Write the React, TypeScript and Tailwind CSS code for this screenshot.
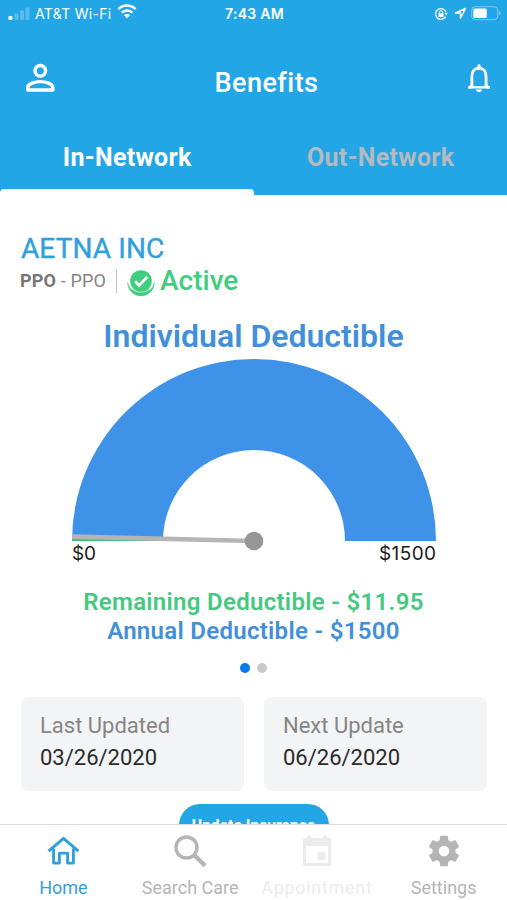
import { ReactNode } from 'react';

const R = 182;
const CX = 254;
const CY = 184;

function StatusBar() {
  return (
    <div className="h-7 grid grid-cols-[1fr_auto_1fr] items-center pb-px pl-2 pr-1.5 text-white font-['Inter',sans-serif]">
      <div className="flex items-center">
        <svg width="22" height="14" viewBox="0 0 22 14" fill="currentColor">
          <rect x="0.5" y="9" width="4" height="4" rx="1" />
          <rect x="6.5" y="6.5" width="4" height="6.5" rx="1" opacity="0.25" />
          <rect x="12" y="3.5" width="4" height="9.5" rx="1" opacity="0.25" />
          <rect x="17.5" y="0.5" width="4" height="12.5" rx="1" opacity="0.25" />
        </svg>
        <span className="ml-[5px] -mt-px text-[14px] tracking-[0.3px]">AT&amp;T Wi-Fi</span>
        <svg className="ml-[5px] -mt-1" width="20" height="15" viewBox="0 0 20 15" fill="none" stroke="currentColor" strokeWidth="2.6">
          <path d="M1.5 5.1a12 12 0 0 1 17 0" />
          <path d="M4.7 8.6a7.6 7.6 0 0 1 10.6 0" />
          <path d="M7 11.3a4.3 4.3 0 0 1 6 0L10 14.3Z" fill="currentColor" stroke="none" />
        </svg>
      </div>
      <span className="-mt-px text-[14px] font-semibold tracking-[0.3px]">7:43 AM</span>
      <div className="flex items-center justify-end">
        <svg width="14" height="14" viewBox="0 0 14 14" fill="none" stroke="currentColor" strokeWidth="1.3">
          <path d="M11.6 9.7a5.4 5.4 0 1 1 .3-4.9" />
          <path d="M10.5 5.8h3.3l-1.6 2.6Z" fill="currentColor" stroke="none" />
          <rect x="4.5" y="6.3" width="5" height="3.8" fill="currentColor" stroke="none" />
          <path d="M5.4 6.5V5.3a1.6 1.6 0 0 1 3.2 0v1.2" strokeWidth="1" />
        </svg>
        <svg className="ml-1.5" width="13" height="13" viewBox="0 0 13 13" fill="none" stroke="currentColor" strokeWidth="1.5" strokeLinejoin="round">
          <path d="M11.5 1.5 1.5 6h5v5Z" />
        </svg>
        <svg className="ml-1" width="30" height="15" viewBox="0 0 30 15" fill="none">
          <rect x="0.7" y="0.7" width="26" height="13" rx="3.5" stroke="currentColor" strokeOpacity="0.4" />
          <rect x="2.3" y="2.5" width="13.5" height="9.5" rx="1.5" fill="currentColor" />
          <path d="M28 5v4.5q1.5-.6 1.5-2.2T28 5Z" fill="currentColor" fillOpacity="0.45" />
        </svg>
      </div>
    </div>
  );
}

function Header() {
  return (
    <header className="h-[195px] flex flex-col bg-[#23a6e6]">
      <StatusBar />
      <div className="h-[92px] grid grid-cols-[1fr_auto_1fr] items-center pt-[17px] pl-[42px] pr-4 text-white">
        <svg className="-ml-4 -mt-2.5" width="29" height="30" viewBox="0 0 29 30" fill="none" stroke="currentColor" strokeWidth="3.4">
          <circle cx="14.3" cy="7.8" r="5.3" />
          <path d="M1.8 27v-2.6c0-3.7 7.2-5.8 12.5-5.8s12.5 2.1 12.5 5.8V27Z" strokeLinejoin="round" />
        </svg>
        <h1 className="text-[27px] leading-8 font-medium tracking-[0.45px]">Benefits</h1>
        <svg className="-mt-[9px] justify-self-end" width="24" height="30" viewBox="0 0 24 30" fill="none" stroke="currentColor" strokeWidth="2.8">
          <path d="M4.9 24V13.3C4.9 8.6 7.6 5.2 12 5.2s7.1 3.4 7.1 8.1V24" />
          <path d="M1.2 24.3h21.6" strokeWidth="2.4" />
          <path d="M1.2 25.4v-1.6l3.5-3v4.6ZM22.8 25.4v-1.6l-3.5-3v4.6Z" fill="currentColor" stroke="none" />
          <path d="M12 3v2.2" strokeWidth="3.4" strokeLinecap="round" />
          <path d="M9 26.6h6a3 2.4 0 0 1-6 0Z" fill="currentColor" stroke="none" />
        </svg>
      </div>
      <div className="flex-1 grid grid-cols-2 text-[25px] font-bold text-center">
        <div className="flex flex-col justify-between pt-[22px]">
          <span className="pl-px text-white leading-8 tracking-[0.3px]">In-Network</span>
          <div className="h-1.5 bg-white rounded-t-[4px]" />
        </div>
        <div className="pt-[22px] pl-px text-[#b3bac0] leading-8 tracking-[0.3px]">Out-Network</div>
      </div>
    </header>
  );
}

function Gauge() {
  return (
    <svg className="block" width="507" height="212" viewBox="0 0 507 212">
      <path
        d={`M${CX - R} ${CY}A${R} ${R} 0 0 1 ${CX + R} ${CY}H${CX + R / 2}A${R / 2} ${R / 2} 0 0 0 ${CX - R / 2} ${CY}Z`}
        fill="#3e92e8"
      />
      <path d="M72 184V179.4L163 182v2Z" fill="#3fbf77" />
      <path d="M72 177.2 254 181.8v4.4L72 182Z" fill="#b5b5b5" />
      <circle cx={CX} cy={CY} r="9.3" fill="#969696" />
      <g className="font-['Inter',sans-serif] text-[19px]" fill="#1c1c1c">
        <text x="72" y="203" textLength="24">$0</text>
        <text x="379" y="203" textLength="57">$1500</text>
      </g>
    </svg>
  );
}

function DateCard({ label, value }: { label: string; value: string }) {
  return (
    <div className="h-[94px] flex-1 rounded-lg bg-[#f3f4f6] px-[19px] pt-[13px] text-[22px] leading-8">
      <p className="text-[#858585]">{label}</p>
      <p className="text-[#2b2b2b]">{value}</p>
    </div>
  );
}

function NavItem({ label, color, children }: { label: string; color: string; children: ReactNode }) {
  return (
    <div className={`flex flex-1 flex-col items-center pt-[9px] ${color}`}>
      <svg width="34" height="34" viewBox="0 0 34 34" fill="none" stroke="currentColor">
        {children}
      </svg>
      <span className="mt-2 text-lg leading-6 whitespace-nowrap">{label}</span>
    </div>
  );
}

export default function App() {
  return (
    <div className="w-[507px] h-[900px] flex flex-col overflow-hidden bg-white font-['Roboto',sans-serif]">
      <Header />

      <main className="h-[629px] overflow-hidden">
        <div className="px-5 pt-9">
          <h2 className="pl-px text-[28px] leading-9 tracking-[0.1px] text-[#329fdd] [-webkit-text-stroke:0.4px]">AETNA INC</h2>
          <div className="flex h-7 items-center text-[#858585]">
            <p className="text-lg tracking-[0.15px]"><b className="text-[#777]">PPO</b> - PPO</p>
            <div className="ml-2.5 h-6 w-px bg-[#c4c4c4]" />
            <svg className="ml-2.5 mt-1" width="28" height="28" viewBox="0 0 28 28" fill="none">
              <circle cx="14" cy="12" r="10.8" fill="#3fce7e" />
              <path d="M.6 13.5a13.4 13.4 0 0 0 26.8 0A13.5 11.6 0 0 1 .6 13.5Z" fill="#3fce7e" stroke="#3fce7e" strokeWidth=".5" />
              <path d="m8.2 12.3 4 4.2 8-8.6" stroke="#fff" strokeWidth="2.8" />
            </svg>
            <span className="ml-[5px] text-[28px] font-medium text-[#3fce7e]">Active</span>
          </div>
        </div>

        <h3 className="mt-[21px] mb-px text-center text-[32px] leading-10 font-semibold text-[#428fda]">Individual Deductible</h3>
        <Gauge />

        <div className="mt-[19px] text-center text-2xl leading-[29px] tracking-[0.3px] font-semibold">
          <p className="text-[#45c97f]">Remaining Deductible - $11.95</p>
          <p className="text-[#428fda]">Annual Deductible - $1500</p>
        </div>

        <div className="mt-[17px] flex justify-center gap-[7px]">
          <span className="size-2.5 rounded-full bg-[#0879ef]" />
          <span className="size-2.5 rounded-full bg-[#c9c9c9]" />
        </div>

        <div className="mt-6 flex gap-5 pl-[21px] pr-5">
          <DateCard label="Last Updated" value="03/26/2020" />
          <DateCard label="Next Update" value="06/26/2020" />
        </div>

        <button className="mx-auto mt-[13px] block h-[43px] w-[150px] rounded-[21px] bg-[#23a6e6] text-[15.7px] font-bold text-white">
          Update Insurance
        </button>
      </main>

      <nav className="flex flex-1 border-t border-[#d9d9d9]">
        <NavItem label="Home" color="text-[#32a0dc]">
          <path d="M2.6 17.2 17.5 4.4l14.9 12.8" strokeWidth="3" />
          <path d="M7.6 14.5v14.6h5.8v-10h8.2v10h5.8V14.5" strokeWidth="2.9" strokeLinejoin="round" />
        </NavItem>
        <NavItem label="Search Care" color="text-[#b5b5b5]">
          <circle cx="13.5" cy="13.5" r="10.5" strokeWidth="3.4" />
          <path d="m21 21 11 10.5" strokeWidth="4.4" />
        </NavItem>
        <NavItem label="Appointment" color="text-[#ececec] tracking-[0.7px]">
          <path d="M4.5 5.5h25v25h-25Z" strokeWidth="3" strokeLinejoin="round" />
          <path d="M3 6a2 2 0 0 1 2-2h24a2 2 0 0 1 2 2v6H3ZM7.5 1.5h3V6h-3ZM23.5 1.5h3V6h-3ZM17.5 18h8v8h-8Z" fill="currentColor" stroke="none" />
        </NavItem>
        <NavItem label="Settings" color="text-[#b5b5b5]">
          <path
            transform="translate(-2.2 -2.2) scale(1.6)"
            d="M19.14 12.94c.04-.3.06-.61.06-.94 0-.32-.02-.64-.07-.94l2.03-1.58c.18-.14.23-.41.12-.61l-1.92-3.32c-.12-.22-.37-.29-.59-.22l-2.39.96c-.5-.38-1.03-.7-1.62-.94l-.36-2.54c-.04-.24-.24-.41-.48-.41h-3.84c-.24 0-.43.17-.47.41l-.36 2.54c-.59.24-1.13.57-1.62.94l-2.39-.96c-.22-.08-.47 0-.59.22L2.74 8.87c-.12.21-.08.47.12.61l2.03 1.58c-.05.3-.09.63-.09.94s.02.64.07.94l-2.03 1.58c-.18.14-.23.41-.12.61l1.92 3.32c.12.22.37.29.59.22l2.39-.96c.5.38 1.03.7 1.62.94l.36 2.54c.05.24.24.41.48.41h3.84c.24 0 .44-.17.47-.41l.36-2.54c.59-.24 1.13-.56 1.62-.94l2.39.96c.22.08.47 0 .59-.22l1.92-3.32c.12-.22.07-.47-.12-.61l-2.01-1.58zM12 15.3A3.3 3.3 0 1 1 12 8.7a3.3 3.3 0 0 1 0 6.6z"
            fill="currentColor"
            stroke="none"
          />
        </NavItem>
      </nav>
    </div>
  );
}
